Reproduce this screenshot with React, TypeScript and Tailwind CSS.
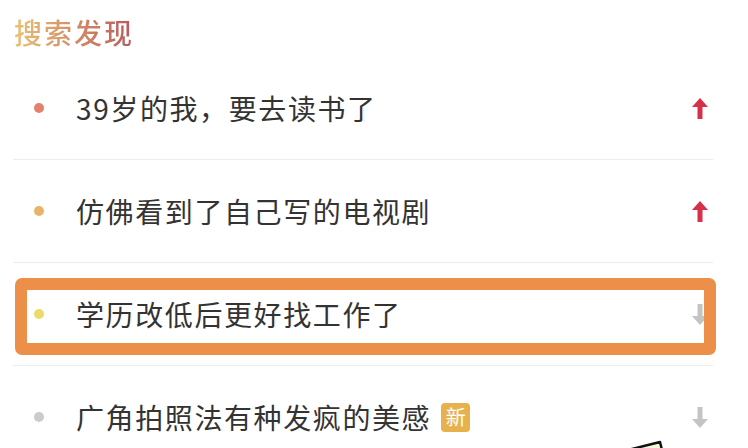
import { ReactNode } from "react";

// Trend arrow: red up for rising, grey down for falling
const TrendArrow = ({ up }: { up: boolean }) => (
  <svg width="16" height="21" viewBox="0 0 16 21" className={up ? "text-[#d6304a]" : "text-[#c4c4c4]"}>
    {up ? (
      <path d="M8 0 L16 9 L10.5 9 L10.5 21 L5.5 21 L5.5 9 L0 9 Z" fill="currentColor" />
    ) : (
      <path d="M8 21 L16 12 L10.5 12 L10.5 0 L5.5 0 L5.5 12 L0 12 Z" fill="currentColor" />
    )}
  </svg>
);

type Item = { title: string; dot: string; up: boolean; badge?: ReactNode };

const items: Item[] = [
  { title: "39岁的我，要去读书了", dot: "bg-[#e5806c]", up: true },
  { title: "仿佛看到了自己写的电视剧", dot: "bg-[#e9b468]", up: true },
  { title: "学历改低后更好找工作了", dot: "bg-[#ecdb6a]", up: false },
  {
    title: "广角拍照法有种发疯的美感",
    dot: "bg-[#cbcbcb]",
    up: false,
    badge: (
      <span className="ml-[10px] flex h-[29px] w-[29px] items-center justify-center rounded-[4px] bg-[#e7b24e] text-[20px] leading-none text-white">
        新
      </span>
    ),
  },
];

export default function App() {
  return (
    <div className="relative h-[448px] w-[748px] overflow-hidden bg-white font-['Noto_Sans_CJK_SC','Noto_Sans',sans-serif]">
      {/* Section heading with gold-to-rose gradient text */}
      <div className="h-[57px] pl-[14px] pt-[15px]">
        <span className="bg-gradient-to-r from-[#e9c272] to-[#b9585c] bg-clip-text text-[28px] font-medium leading-[34px] tracking-[2px] text-transparent">
          搜索发现
        </span>
      </div>

      {/* Search suggestions */}
      <ul className="ml-[13px] w-[700px]">
        {items.map((item) => (
          <li
            key={item.title}
            className="flex h-[103px] items-center border-b border-[#ececec] pl-[21px] pr-[5px]"
          >
            <span className={`h-[10px] w-[10px] shrink-0 rounded-full ${item.dot}`} />
            <span className="ml-[32px] text-[28px] leading-none tracking-[1.6px] text-[#333333]">
              {item.title}
            </span>
            {item.badge}
            <span className="ml-auto">
              <TrendArrow up={item.up} />
            </span>
          </li>
        ))}
      </ul>

      {/* Orange highlight annotation over the third row */}
      <div className="absolute left-[15px] top-[278px] h-[77px] w-[701px] rounded-[7px] border-[12px] border-[#ec9049]" />

      {/* Tip of a hand-drawn pointer entering from the bottom */}
      <svg className="absolute left-[626px] top-[440px]" width="40" height="10" viewBox="0 0 40 10">
        <path d="M2 10 L30 3 L34 2 L36 10 Z" fill="#fbf7d8" stroke="#111" strokeWidth="2.5" strokeLinejoin="round" />
      </svg>
    </div>
  );
}
